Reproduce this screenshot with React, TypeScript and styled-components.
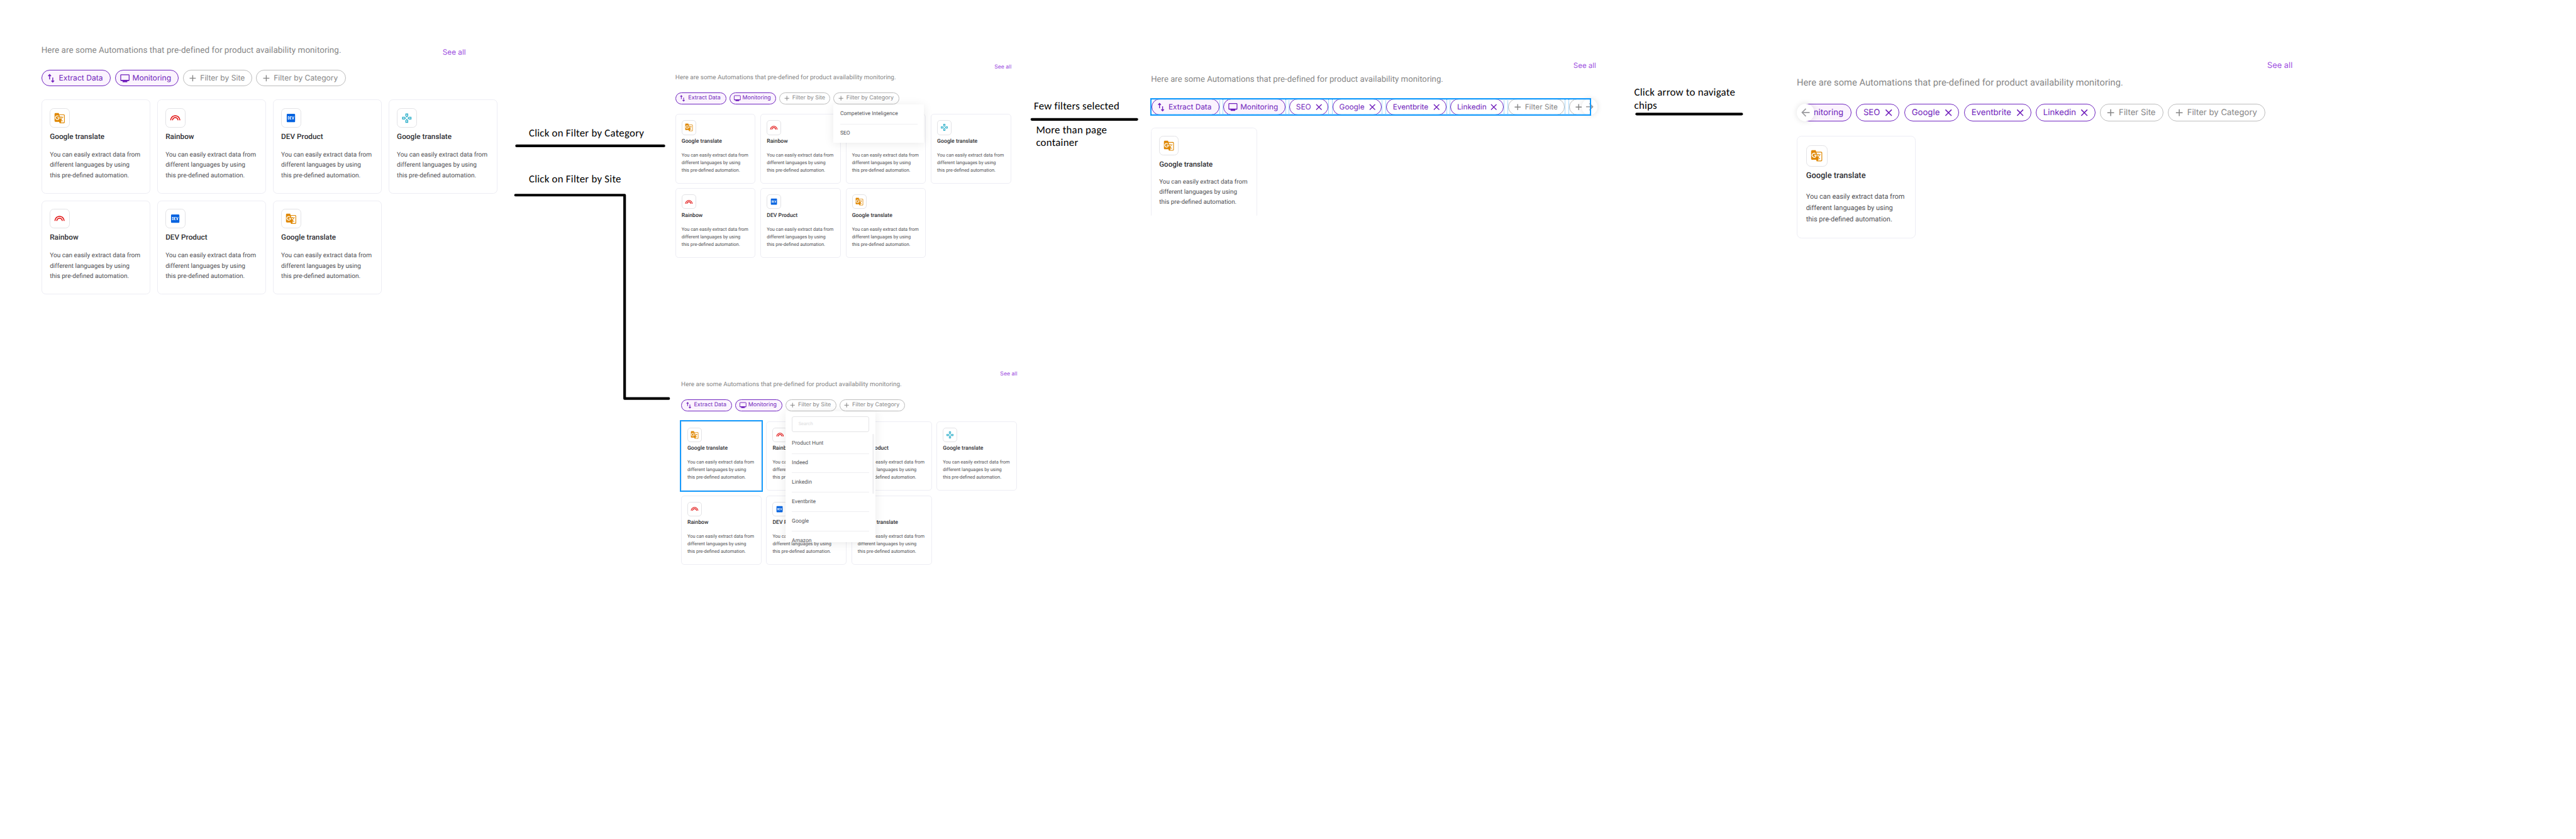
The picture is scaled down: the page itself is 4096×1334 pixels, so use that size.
import React from "react";
import styled, { createGlobalStyle, css } from "styled-components";
import {
  MdAdd,
  MdArrowBack,
  MdArrowForward,
  MdClose,
  MdGTranslate,
  MdLooks,
  MdOutlineGamepad,
} from "react-icons/md";
import { FaDev } from "react-icons/fa";

/* Every size inside a board is given in board units; --u holds one unit. */
const u = (n: number) => `calc(var(--u) * ${n})`;
const BASE = 0.842105;

const GlobalStyle = createGlobalStyle`
  *, *::before, *::after { box-sizing: border-box; }
  body {
    margin: 0;
    background: #fff;
    text-rendering: geometricPrecision;
  }
`;

const Canvas = styled.main`
  position: relative;
  width: 4096px;
  height: 1334px;
  overflow: hidden;
  background: #fff;
  font-family: Roboto, "Liberation Sans", sans-serif;
`;

const BoardFrame = styled.section<{ $x: number; $y: number; $scale: number }>`
  --u: ${(p) => p.$scale * BASE}px;
  position: absolute;
  left: ${(p) => p.$x * BASE}px;
  top: ${(p) => p.$y * BASE}px;
  width: ${u(862)};
  display: flex;
  flex-direction: column;
`;

const Header = styled.header<{ $width: number }>`
  display: flex;
  justify-content: space-between;
  align-items: flex-start;
  width: ${(p) => u(p.$width)};
  height: ${u(80)};
`;

const Intro = styled.p<{ $drop: number }>`
  margin: 0;
  padding-top: ${(p) => u(p.$drop)};
  font-size: ${u(16)};
  line-height: ${u(24)};
  letter-spacing: ${u(0.045)};
  white-space: nowrap;
  color: #868686;
`;

const SeeAll = styled.a<{ $drop: number }>`
  margin-top: ${(p) => u(p.$drop)};
  font-family: Inter, "Liberation Sans", sans-serif;
  font-size: ${u(14)};
  line-height: ${u(20)};
  white-space: nowrap;
  color: #9d4ee0;
`;

const ChipBar = styled.div`
  position: relative;
  z-index: 2;
  height: ${u(30.7)};
`;

const ChipViewport = styled.div<{ $width?: number; $left?: number }>`
  margin-left: ${(p) => u(p.$left ?? 0)};
  ${(p) =>
    p.$width &&
    css`
      width: ${u(p.$width)};
      overflow: hidden;
    `}
`;

const ChipRow = styled.div<{ $shift?: number }>`
  display: flex;
  gap: ${u(8)};
  margin-left: ${(p) => u(p.$shift ?? 0)};
`;

type Tone = "filled" | "picked" | "ghost";

const ChipBody = styled.div<{ $tone: Tone; $width: number; $marked?: boolean }>`
  position: relative;
  flex: none;
  display: flex;
  align-items: center;
  width: ${(p) => u(p.$width)};
  height: ${u(30.7)};
  padding: 0 calc(${u(9)} - 1px);
  border: 1px solid ${(p) => (p.$tone === "ghost" ? "#bdbdbd" : "#7026c0")};
  border-radius: ${u(16)};
  background: ${(p) => (p.$tone === "filled" ? "#fbf3fe" : "#fff")};
  color: ${(p) => (p.$tone === "ghost" ? "#868686" : "#6f1dbb")};
  font-family: Inter, "Liberation Sans", sans-serif;
  font-size: ${u(14.4)};
  line-height: ${u(20)};
  white-space: nowrap;

  &:not(:first-child)::before {
    content: ${(p) => (p.$marked ? '""' : "none")};
    position: absolute;
    top: -1px;
    bottom: -1px;
    left: calc(${u(-8)} - 1px);
    width: ${u(8)};
    border: 0 dotted #4fb4fb;
    border-width: 0 1px;
  }
`;

const ChipIcon = styled.span<{ $end?: boolean }>`
  display: flex;
  flex: none;
  width: ${u(20)};
  height: ${u(20)};
  font-size: ${u(20)};
  margin-left: ${(p) => (p.$end ? "auto" : "0")};
`;

const ChipLabel = styled.span`
  margin-left: ${u(4)};
`;

const SelectionBox = styled.div<{ $width: number }>`
  position: absolute;
  left: ${u(-1.5)};
  top: ${u(-1.7)};
  width: ${(p) => u(p.$width)};
  height: ${u(34.3)};
  border: 2px solid #189cfc;

  &::after {
    content: "";
    position: absolute;
    inset: 0;
    border: 1px dotted #7cc6fb;
    border-width: 1px 0;
  }
`;

const ScrollButton = styled.button<{ $center: number }>`
  position: absolute;
  top: 0;
  left: ${(p) => u(p.$center - 15.35)};
  display: flex;
  align-items: center;
  justify-content: center;
  width: ${u(30.7)};
  height: ${u(30.7)};
  padding: 0;
  border: 0;
  border-radius: 50%;
  background: #fff;
  box-shadow: 0 0 ${u(10)} rgba(0, 0, 0, 0.12);
  color: #9a9a9e;
  font-size: ${u(21.5)};
`;

const CardGrid = styled.div<{ $clip?: number }>`
  display: grid;
  grid-template-columns: repeat(4, ${u(205.8)});
  gap: ${u(12.6)} ${u(12.7)};
  margin-top: ${u(25.3)};
  ${(p) =>
    p.$clip &&
    css`
      height: ${u(p.$clip)};
      overflow: hidden;
    `}
`;

const CardBody = styled.article<{ $selected?: boolean }>`
  height: ${u(177.7)};
  padding: calc(${u(16)} - 1px);
  border: 1px solid #ededf4;
  border-radius: ${u(8)};
  background: #fff;
  ${(p) =>
    p.$selected &&
    css`
      border-radius: 0;
      outline: 2px solid #189cfc;
    `}
`;

const IconTile = styled.div<{ $color: string; $size: number }>`
  display: flex;
  align-items: center;
  justify-content: center;
  width: ${u(37.3)};
  height: ${u(37.3)};
  border: 1px solid #e3e3e6;
  border-radius: ${u(8)};
  color: ${(p) => p.$color};
  font-size: ${(p) => u(p.$size)};
`;

const CardTitle = styled.h3`
  margin: ${u(6.6)} 0 0;
  font-size: ${u(14)};
  font-weight: 500;
  line-height: ${u(20)};
  letter-spacing: ${u(0.03)};
  white-space: nowrap;
  color: #2f2f33;
`;

const CardText = styled.p`
  margin: ${u(15.8)} 0 0;
  font-size: ${u(12)};
  line-height: ${u(19.6)};
  white-space: nowrap;
  color: #505054;
`;

const Menu = styled.div<{ $height?: number }>`
  position: absolute;
  z-index: 3;
  top: calc(100% + 1px);
  left: -1px;
  width: ${u(232)};
  ${(p) => p.$height && `height: calc(var(--u) * ${p.$height});`}
  padding: 0 ${u(17)};
  background: #fff;
  box-shadow: 0 ${u(4)} ${u(24)} rgba(0, 0, 0, 0.09);
  font-family: Roboto, "Liberation Sans", sans-serif;
`;

const MenuItem = styled.div`
  display: flex;
  align-items: center;
  height: ${u(49.7)};
  font-size: ${u(13.8)};
  color: #55555a;

  & + & {
    border-top: 1px solid #efeff1;
  }
`;

const SearchField = styled.div`
  display: flex;
  align-items: center;
  height: ${u(40.7)};
  margin: ${u(12.7)} 0 ${u(4.4)};
  padding: 0 ${u(15.5)};
  border: 1px solid #e4e4e6;
  border-radius: ${u(5)};
  font-size: ${u(12)};
  color: #dcdcde;
`;

const ScrollThumb = styled.div`
  position: absolute;
  top: ${u(57.5)};
  right: ${u(4)};
  width: ${u(4.4)};
  height: ${u(154)};
  border-radius: ${u(2)};
  background: #f2f2f4;
`;

const Note = styled.p<{ $x: number; $y: number }>`
  position: absolute;
  left: ${(p) => p.$x * BASE}px;
  top: ${(p) => p.$y * BASE}px;
  margin: 0;
  font-family: Carlito, Lato, "Liberation Sans", sans-serif;
  font-size: ${20 * BASE}px;
  line-height: ${24.4 * BASE}px;
  letter-spacing: ${0.28 * BASE}px;
  white-space: pre-line;
  color: #000;
`;

const Connectors = styled.svg`
  position: absolute;
  inset: 0;
  width: 100%;
  height: 100%;
  fill: none;
  stroke: #000;
  stroke-width: 5;
  stroke-linecap: round;
  stroke-linejoin: round;
`;

const SwapIcon = () => (
  <svg viewBox="0 0 20 20" width="1em" height="1em" fill="none" stroke="currentColor" strokeWidth="1.7">
    <path d="M7 12.2V3.6M4.4 5.8 7 3.1l2.6 2.7M12.9 8.6v8M10.3 14.6l2.6 2.7 2.6-2.7" />
  </svg>
);

const MonitorIcon = () => (
  <svg viewBox="0 0 20 20" width="1em" height="1em" fill="none" stroke="currentColor">
    <rect x="2.3" y="3.3" width="15.9" height="11" rx="1" strokeWidth="1.5" />
    <path d="M2.3 14h15.9" strokeWidth="1.8" />
    <path d="M5.8 14.5h9v2a1 1 0 0 1-1 1h-7a1 1 0 0 1-1-1z" fill="currentColor" stroke="none" />
  </svg>
);

type ChipSpec = { label?: string; tone: Tone; width: number; icon?: "swap" | "monitor" | "add" };

const EXTRACT: ChipSpec = { label: "Extract Data", tone: "filled", width: 131, icon: "swap" };
const MONITORING: ChipSpec = { label: "Monitoring", tone: "filled", width: 120, icon: "monitor" };
const BY_SITE: ChipSpec = { label: "Filter by Site", tone: "ghost", width: 130.8, icon: "add" };
const SITE: ChipSpec = { label: "Filter Site", tone: "ghost", width: 110.4, icon: "add" };
const BY_CATEGORY: ChipSpec = { label: "Filter by Category", tone: "ghost", width: 169, icon: "add" };
/* The chip that runs off the end of the bar: only its icon is in view. */
const CUT_OFF: ChipSpec = { tone: "ghost", width: 60, icon: "add" };
const PICKED: ChipSpec[] = [
  { label: "SEO", tone: "picked", width: 75.8 },
  { label: "Google", tone: "picked", width: 95.6 },
  { label: "Eventbrite", tone: "picked", width: 116.6 },
  { label: "Linkedin", tone: "picked", width: 103.2 },
];
const DEFAULT_CHIPS = [EXTRACT, MONITORING, BY_SITE, BY_CATEGORY];

function Chip({ chip, marked, children }: { chip: ChipSpec; marked?: boolean; children?: React.ReactNode }) {
  return (
    <ChipBody $tone={chip.tone} $width={chip.width} $marked={marked}>
      {chip.icon && (
        <ChipIcon>
          {chip.icon === "swap" && <SwapIcon />}
          {chip.icon === "monitor" && <MonitorIcon />}
          {chip.icon === "add" && <MdAdd />}
        </ChipIcon>
      )}
      {chip.label && <ChipLabel>{chip.label}</ChipLabel>}
      {!chip.icon && (
        <ChipIcon $end>
          <MdClose />
        </ChipIcon>
      )}
      {children}
    </ChipBody>
  );
}

type CardKind = "translate" | "rainbow" | "dev" | "gamepad";

const CARDS: Record<CardKind, { title: string; color: string; size: number; icon: React.ReactNode }> = {
  translate: { title: "Google translate", color: "#df8700", size: 21, icon: <MdGTranslate /> },
  rainbow: { title: "Rainbow", color: "#e00b0b", size: 20.7, icon: <MdLooks /> },
  dev: { title: "DEV Product", color: "#0563e0", size: 18, icon: <FaDev /> },
  gamepad: { title: "Google translate", color: "#2fb0ca", size: 21, icon: <MdOutlineGamepad /> },
};
const ALL_CARDS: CardKind[] = ["translate", "rainbow", "dev", "gamepad", "rainbow", "dev", "translate"];

function Card({ kind, selected }: { kind: CardKind; selected?: boolean }) {
  const card = CARDS[kind];
  return (
    <CardBody $selected={selected}>
      <IconTile $color={card.color} $size={card.size}>
        {card.icon}
      </IconTile>
      <CardTitle>{card.title}</CardTitle>
      <CardText>
        You can easily extract data from
        <br />
        different languages by using
        <br />
        this pre-defined automation.
      </CardText>
    </CardBody>
  );
}

type BoardProps = {
  x: number;
  y: number;
  scale: number;
  headerWidth?: number;
  introDrop?: number;
  seeAllDrop?: number;
  cards?: CardKind[];
  selectedCard?: number;
  clipCards?: number;
  children: React.ReactNode;
};

function Board({
  x,
  y,
  scale,
  headerWidth = 862,
  introDrop = 30.5,
  seeAllDrop = 5,
  cards = ALL_CARDS,
  selectedCard,
  clipCards,
  children,
}: BoardProps) {
  return (
    <BoardFrame $x={x} $y={y} $scale={scale}>
      <Header $width={headerWidth}>
        <Intro $drop={introDrop}>
          Here are some Automations that pre-defined for product availability monitoring.
        </Intro>
        <SeeAll $drop={seeAllDrop}>See all</SeeAll>
      </Header>
      <ChipBar>{children}</ChipBar>
      <CardGrid $clip={clipCards}>
        {cards.map((kind, i) => (
          <Card key={i} kind={kind} selected={i === selectedCard} />
        ))}
      </CardGrid>
    </BoardFrame>
  );
}

export default function App() {
  return (
    <>
      <GlobalStyle />
      <Canvas>
        <Board x={78} y={52} scale={1} headerWidth={801.5} introDrop={32} seeAllDrop={36.5}>
          <ChipRow>
            {DEFAULT_CHIPS.map((c) => (
              <Chip key={c.label} chip={c} />
            ))}
          </ChipRow>
        </Board>

        <Board x={1275.2} y={115.4} scale={0.7363} introDrop={31.5} seeAllDrop={6}>
          <ChipRow>
            {DEFAULT_CHIPS.map((c) => (
              <Chip key={c.label} chip={c}>
                {c === BY_CATEGORY && (
                  <Menu>
                    <MenuItem>Competetive Inteligence</MenuItem>
                    <MenuItem>SEO</MenuItem>
                  </Menu>
                )}
              </Chip>
            ))}
          </ChipRow>
        </Board>

        <Board x={1286.1} y={695.1} scale={0.7363} introDrop={31.5} seeAllDrop={6} selectedCard={0}>
          <ChipRow>
            {DEFAULT_CHIPS.map((c) => (
              <Chip key={c.label} chip={c}>
                {c === BY_SITE && (
                  <Menu $height={335}>
                    <SearchField>Search</SearchField>
                    <MenuItem>Product Hunt</MenuItem>
                    <MenuItem>Indeed</MenuItem>
                    <MenuItem>Linkedin</MenuItem>
                    <MenuItem>Eventbrite</MenuItem>
                    <MenuItem>Google</MenuItem>
                    <MenuItem>Amazon</MenuItem>
                    <ScrollThumb />
                  </Menu>
                )}
              </Chip>
            ))}
          </ChipRow>
        </Board>

        <Board x={2173.3} y={108.9} scale={0.975} cards={["translate"]} clipCards={170.7}>
          <ChipViewport $width={850}>
            <ChipRow $shift={1}>
              {[EXTRACT, MONITORING, ...PICKED, SITE, CUT_OFF].map((c, i) => (
                <Chip key={i} chip={c} marked />
              ))}
            </ChipRow>
          </ChipViewport>
          <ScrollButton $center={849.3} aria-label="Next chips">
            <MdArrowForward />
          </ScrollButton>
          <SelectionBox $width={853.3} />
        </Board>

        <Board x={3392.7} y={108.9} scale={1.0885} headerWidth={860} cards={["translate"]}>
          <ChipViewport $left={15} $width={847}>
            <ChipRow $shift={-40.4}>
              {[MONITORING, ...PICKED, SITE, BY_CATEGORY].map((c) => (
                <Chip key={c.label} chip={c} />
              ))}
            </ChipRow>
          </ChipViewport>
          <ScrollButton $center={15} aria-label="Previous chips">
            <MdArrowBack />
          </ScrollButton>
        </Board>

        <Connectors viewBox="0 0 4864 1584" preserveAspectRatio="none">
          <path d="M975.4 275.4H1253.6" />
          <path d="M973.4 368.4H1179.4V752.4H1262.6" />
          <path d="M1948.4 225.4H2146.6" />
          <path d="M3090.4 215.3H3288.6" />
        </Connectors>

        <Note $x={998.6} $y={239.5}>Click on Filter by Category</Note>
        <Note $x={998.6} $y={326.5}>Click on Filter by Site</Note>
        <Note $x={1952.3} $y={188.5}>Few filters selected</Note>
        <Note $x={1956.3} $y={233.5}>{"More than page\ncontainer"}</Note>
        <Note $x={3085.8} $y={163}>{"Click arrow to navigate\nchips"}</Note>
      </Canvas>
    </>
  );
}
